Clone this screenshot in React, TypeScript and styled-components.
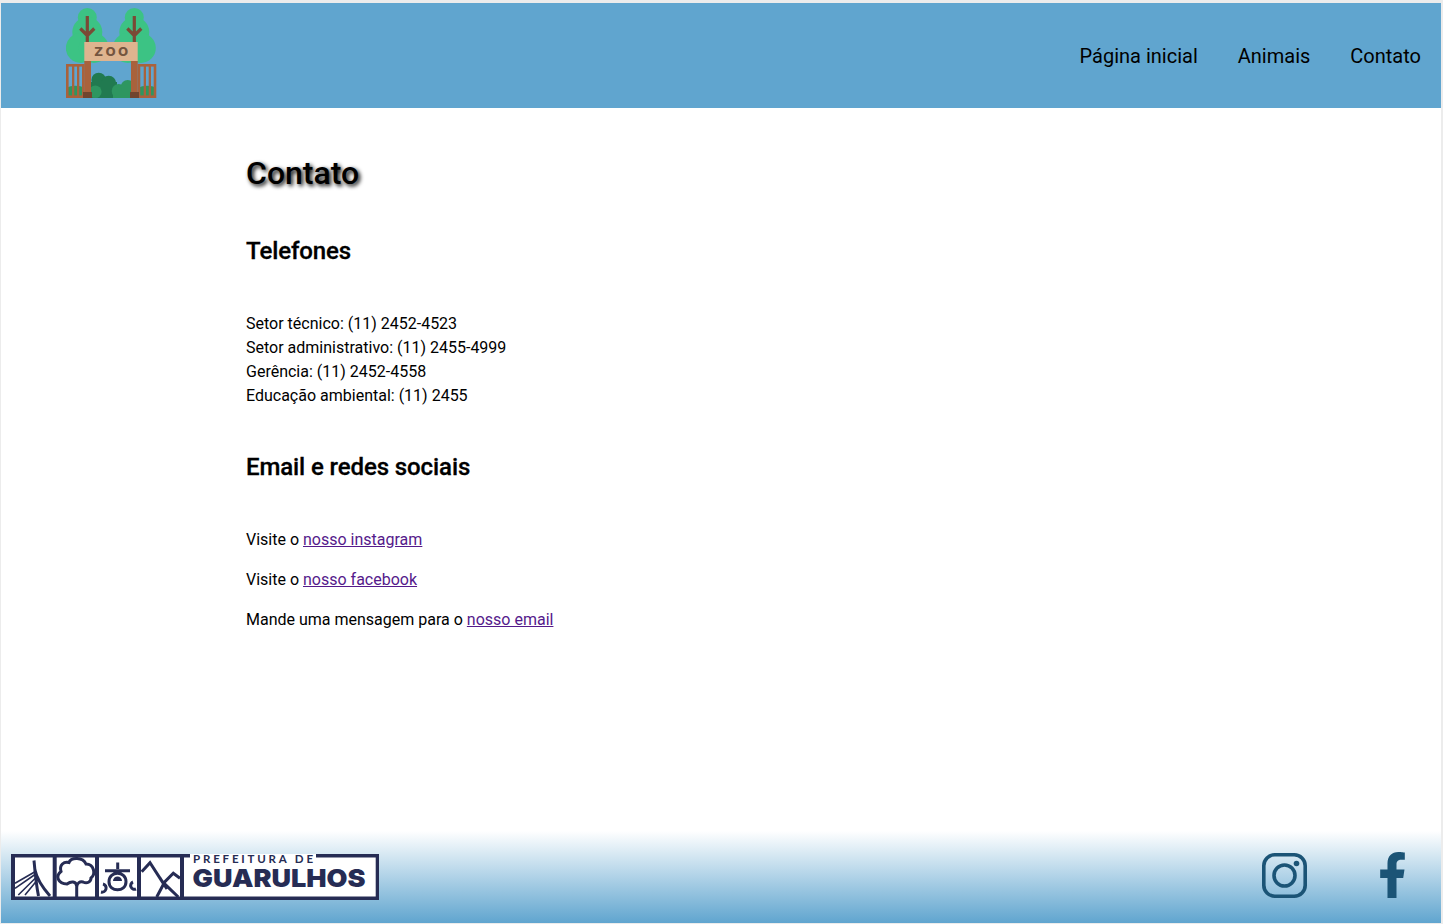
import styled, { createGlobalStyle } from 'styled-components'
import { FaFacebookF } from 'react-icons/fa'

const GlobalStyle = createGlobalStyle`
  html, body {
    margin: 0;
    padding: 0;
    background: #ffffff;
  }

  body {
    font-family: Roboto, "Liberation Sans", sans-serif;
    color: #000000;
  }
`

const Frame = styled.div`
  box-sizing: border-box;
  width: 1443px;
  height: 924px;
  display: flex;
  flex-direction: column;
  border-style: solid;
  border-color: #ececec;
  border-width: 3px 2px 1px 1px;
  overflow: hidden;
`

const Header = styled.header`
  flex: none;
  height: 105px;
  display: flex;
  align-items: center;
  justify-content: space-between;
  padding: 0 20px 0 65px;
  background: #60a5cf;
`

const ZooLogo = styled.svg`
  display: block;
  width: 92px;
  height: 92px;
  margin-top: -3px;
`

const Nav = styled.nav`
  display: flex;
  gap: 40px;
`

const NavLink = styled.a`
  font-size: 20px;
  line-height: 24px;
  color: #000000;
  text-decoration: none;
`

const Main = styled.main`
  flex: 1;
  padding: 0 0 0 245px;
`

const PageTitle = styled.h1`
  margin: 46px 0 0;
  font-size: 32px;
  line-height: 38px;
  font-weight: 500;
  text-shadow: 2px 2px 4px #000000;
`

const SectionTitle = styled.h2`
  margin: 45px 0 0;
  font-size: 24px;
  line-height: 28px;
  font-weight: 500;
  letter-spacing: -0.1px;
  -webkit-text-stroke: 0.3px #000000;
`

const PhoneList = styled.p`
  margin: 47px 0 0;
  font-size: 16px;
  line-height: 24px;
`

const LinkList = styled.div`
  display: flex;
  flex-direction: column;
  gap: 16px;
  margin-top: 47px;
`

const LinkRow = styled.p`
  margin: 0;
  font-size: 16px;
  line-height: 24px;
`

const VisitedLink = styled.a`
  color: #551a8b;
  text-decoration: underline;
`

const Footer = styled.footer`
  flex: none;
  height: 92px;
  display: flex;
  align-items: center;
  justify-content: space-between;
  padding: 0 34px 0 10px;
  background: linear-gradient(#ffffff, #60a5cf);
`

const CityLogo = styled.svg`
  display: block;
  width: 368px;
  height: 46px;
  overflow: visible;
`

const Socials = styled.div`
  display: flex;
  align-items: center;
  gap: 71px;
  margin-top: -4px;
  color: #1b5476;
`

const InstagramIcon = styled.svg`
  display: block;
  width: 45px;
  height: 45px;
`

const FacebookIcon = styled(FaFacebookF)`
  display: block;
  width: 29px;
  height: 46px;
`

const Tree = ({ x }: { x: number }) => (
  <g transform={`translate(${x} 0)`}>
    <g fill="#3cc384">
      <circle cx="0" cy="9.500" r="9.500" />
      <circle cx="0" cy="24" r="15" />
      <circle cx="-6.500" cy="40" r="15" />
      <circle cx="6.500" cy="40" r="15" />
    </g>
    <path
      d="M0 8V37M-7 20.500L0 27.500M7 20.500L0 27.500"
      fill="none"
      stroke="#7a4a35"
      strokeWidth="3.200"
    />
  </g>
)

const Fence = ({ x }: { x: number }) => (
  <g transform={`translate(${x} 0)`}>
    <path d="M1 90V80c3-3 14-3 17 0v10z" fill="#2e9660" />
    <rect x="1.300" y="57.300" width="16" height="31.400" fill="none" stroke="#a9623c" strokeWidth="2.600" />
    <rect x="6" y="57" width="2.300" height="32" fill="#a9623c" />
    <rect x="11" y="57" width="2.300" height="32" fill="#a9623c" />
  </g>
)

const ZooMark = () => (
  <ZooLogo viewBox="0 0 92 92" aria-label="Zoo">
    <Tree x={21.300} />
    <Tree x={68.300} />
    <Fence x={0} />
    <Fence x={71.700} />
    <g fill="#217a50">
      <circle cx="32.700" cy="72" r="7.300" />
      <circle cx="42.700" cy="75.300" r="7.500" />
      <rect x="25" y="74" width="26" height="16" />
    </g>
    <g fill="#2e9660">
      <circle cx="29.300" cy="83.700" r="6.300" />
      <circle cx="52.700" cy="83" r="7" />
      <circle cx="61.700" cy="79" r="7" />
      <rect x="47" y="84" width="19" height="6" />
    </g>
    <rect x="18.300" y="53" width="6.700" height="37" fill="#a9623c" />
    <rect x="65" y="53" width="6.700" height="37" fill="#a9623c" />
    <rect x="17" y="84" width="9" height="6" fill="#71452f" />
    <rect x="64" y="84" width="9" height="6" fill="#71452f" />
    <rect x="18.300" y="34" width="53.400" height="19" fill="#dfb48f" />
    <text
      x="28.300"
      y="48"
      textLength="34"
      lengthAdjust="spacing"
      fontFamily="'DejaVu Sans', sans-serif"
      fontSize="12"
      fontWeight="700"
      fill="#75553f"
    >
      ZOO
    </text>
  </ZooLogo>
)

const CityMark = () => (
  <CityLogo viewBox="0 0 368 46" aria-label="Prefeitura de Guarulhos">
    <rect width="368" height="46" fill="#262c54" />
    <g fill="#ffffff">
      <rect x="4" y="3.500" width="37.700" height="39" />
      <rect x="45.700" y="3.500" width="38.300" height="39" />
      <rect x="88" y="3.500" width="38" height="39" />
      <rect x="130" y="3.500" width="39" height="39" />
      <rect x="173" y="3.500" width="191.700" height="39" />
      <rect x="179" y="0" width="126" height="4" />
    </g>
    <g fill="none" stroke="#262c54" strokeWidth="3">
      <path d="M23 6.500C24 18 25 30 27.500 42M24 16C26 26 32 34 39 42" />
      <path d="M65.700 43V32C65 27 60 27 56 30C47 30 44 22 50 17.500C48 11 53 7 58 8.500C60 3 72 3 75 10C83 10 85 20 80 24C80 28 76 30 72 28C69 27 66 29 65.700 33" />
      <path d="M106.700 8.500V15M94 16.700H119M98 27.700C98 16.500 115 16.500 115 27.700C115 38.500 98 38.500 98 27.700ZM92 30A3.500 3.500 0 1 1 90 38M122 28A3.500 3.500 0 1 0 125 35" />
      <path d="M130.700 17.700L139 8.700L152.300 29.300L162.300 19.300L169 24.300M145.700 43L153 29.300L167.300 43M149 24L156 35" />
    </g>
    <g fill="none" stroke="#262c54" strokeWidth="1.600">
      <path d="M24 17.700L4 29.300M24 20.500L4 34.300M25 23.500L7.300 41M25.500 27L14 41" />
    </g>
    <path d="M102 27A4.500 4.500 0 0 1 111 27Z" fill="#262c54" />
    <text
      x="182"
      y="8.500"
      textLength="120"
      lengthAdjust="spacing"
      fontFamily="Lato, 'Open Sans', sans-serif"
      fontSize="11.500"
      fontWeight="700"
      fill="#262c54"
    >
      PREFEITURA DE
    </text>
    <text
      x="181.500"
      y="33"
      textLength="173"
      lengthAdjust="spacingAndGlyphs"
      fontFamily="Inter, 'Open Sans', sans-serif"
      fontSize="25"
      fontWeight="900"
      fill="#262c54"
    >
      GUARULHOS
    </text>
  </CityLogo>
)

const App = () => {
  return (
    <Frame>
      <GlobalStyle />
      <Header>
        <ZooMark />
        <Nav>
          <NavLink href="#">Página inicial</NavLink>
          <NavLink href="#">Animais</NavLink>
          <NavLink href="#">Contato</NavLink>
        </Nav>
      </Header>
      <Main>
        <PageTitle>Contato</PageTitle>
        <SectionTitle>Telefones</SectionTitle>
        <PhoneList>
          Setor técnico: (11) 2452-4523
          <br />
          Setor administrativo: (11) 2455-4999
          <br />
          Gerência: (11) 2452-4558
          <br />
          Educação ambiental: (11) 2455
        </PhoneList>
        <SectionTitle>Email e redes sociais</SectionTitle>
        <LinkList>
          <LinkRow>
            Visite o <VisitedLink href="#">nosso instagram</VisitedLink>
          </LinkRow>
          <LinkRow>
            Visite o <VisitedLink href="#">nosso facebook</VisitedLink>
          </LinkRow>
          <LinkRow>
            Mande uma mensagem para o <VisitedLink href="#">nosso email</VisitedLink>
          </LinkRow>
        </LinkList>
      </Main>
      <Footer>
        <CityMark />
        <Socials>
          <InstagramIcon viewBox="0 0 45 45" aria-label="Instagram">
            <rect x="1.800" y="1.800" width="41.400" height="41.400" rx="11" fill="none" stroke="currentColor" strokeWidth="3.600" />
            <circle cx="22.500" cy="22.500" r="10.500" fill="none" stroke="currentColor" strokeWidth="3.600" />
            <circle cx="34.500" cy="10.500" r="2.800" fill="currentColor" />
          </InstagramIcon>
          <FacebookIcon />
        </Socials>
      </Footer>
    </Frame>
  )
}

export default App
